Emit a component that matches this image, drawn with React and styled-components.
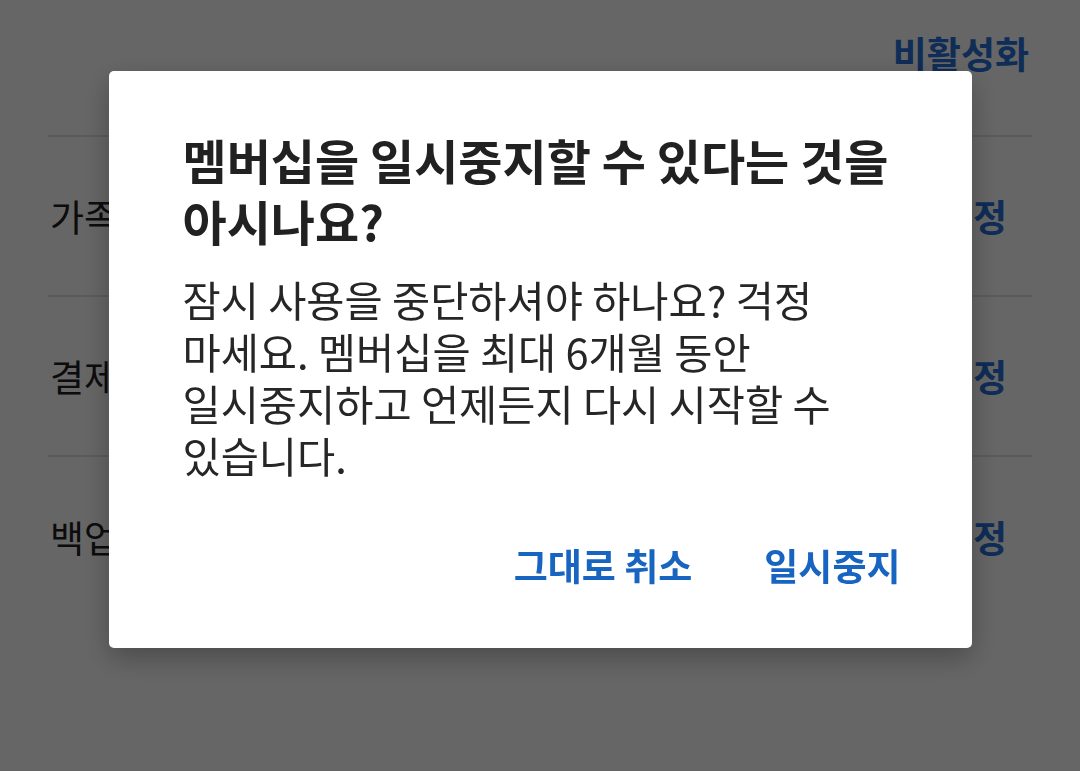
import React from 'react';
import styled, { createGlobalStyle } from 'styled-components';

const GlobalStyle = createGlobalStyle`
  html, body {
    margin: 0;
    padding: 0;
    background: #ffffff;
  }
  body {
    font-family: 'Noto Sans CJK KR', 'Noto Sans', Roboto, sans-serif;
    -webkit-font-smoothing: antialiased;
  }
`;

const Page = styled.div`
  width: 1080px;
  height: 771px;
  overflow: hidden;
  background: #ffffff;
  padding: 0 48px;
  box-sizing: border-box;
`;

const Header = styled.div`
  height: 137px;
  display: flex;
  justify-content: flex-end;
  align-items: flex-start;
  padding: 26px 3px 0 0;
  box-sizing: border-box;
  border-bottom: 2px solid #e4e4e4;
`;

const HeaderLink = styled.span`
  font-size: 37px;
  font-weight: 700;
  color: #2670d8;
`;

const Row = styled.div`
  height: 160px;
  display: flex;
  align-items: center;
  justify-content: space-between;
  padding: 0 25px 0 2px;
  box-sizing: border-box;
  border-bottom: ${p => (p.last ? 'none' : '2px solid #e4e4e4')};
`;

const RowLabel = styled.span`
  font-size: 37px;
  color: #202020;
`;

const RowAction = styled.span`
  font-size: 37px;
  font-weight: 700;
  color: #2670d8;
`;

const Overlay = styled.div`
  position: fixed;
  inset: 0;
  background: rgba(0, 0, 0, 0.6);
  display: flex;
  justify-content: center;
  align-items: flex-start;
  padding-top: 71px;
`;

const Dialog = styled.div`
  width: 863px;
  box-sizing: border-box;
  background: #ffffff;
  border-radius: 5px;
  box-shadow: 0 10px 28px rgba(0, 0, 0, 0.28);
  padding: 58px 53px 51px 74px;
`;

const Title = styled.h2`
  margin: 0;
  font-size: 48px;
  line-height: 61px;
  font-weight: 700;
  color: #212121;
`;

const Body = styled.p`
  margin: 22px 0 0;
  font-size: 41.5px;
  line-height: 52px;
  font-weight: 400;
  color: #262626;
`;

const Actions = styled.div`
  display: flex;
  justify-content: flex-end;
  gap: 36px;
  margin-top: 52px;
`;

const ActionButton = styled.button`
  height: 64px;
  padding: 0 18px;
  border: none;
  background: none;
  font-family: inherit;
  font-size: 37px;
  font-weight: 700;
  color: #1765c1;
  cursor: pointer;
`;

const rows = [
  { label: '가족 공유', action: '설정' },
  { label: '결제 수단', action: '설정' },
  { label: '백업 및 복원', action: '설정' },
];

export default function App() {
  return (
    <React.Fragment>
      <GlobalStyle />
      <Page>
        <Header>
          <HeaderLink>비활성화</HeaderLink>
        </Header>
        {rows.map((row, i) => (
          <Row key={row.label} last={i === rows.length - 1}>
            <RowLabel>{row.label}</RowLabel>
            <RowAction>{row.action}</RowAction>
          </Row>
        ))}
      </Page>
      <Overlay>
        <Dialog>
          <Title>
            멤버십을 일시중지할 수 있다는 것을<br />
            아시나요?
          </Title>
          <Body>
            잠시 사용을 중단하셔야 하나요? 걱정<br />
            마세요. 멤버십을 최대 6개월 동안<br />
            일시중지하고 언제든지 다시 시작할 수<br />
            있습니다.
          </Body>
          <Actions>
            <ActionButton>그대로 취소</ActionButton>
            <ActionButton>일시중지</ActionButton>
          </Actions>
        </Dialog>
      </Overlay>
    </React.Fragment>
  );
}
